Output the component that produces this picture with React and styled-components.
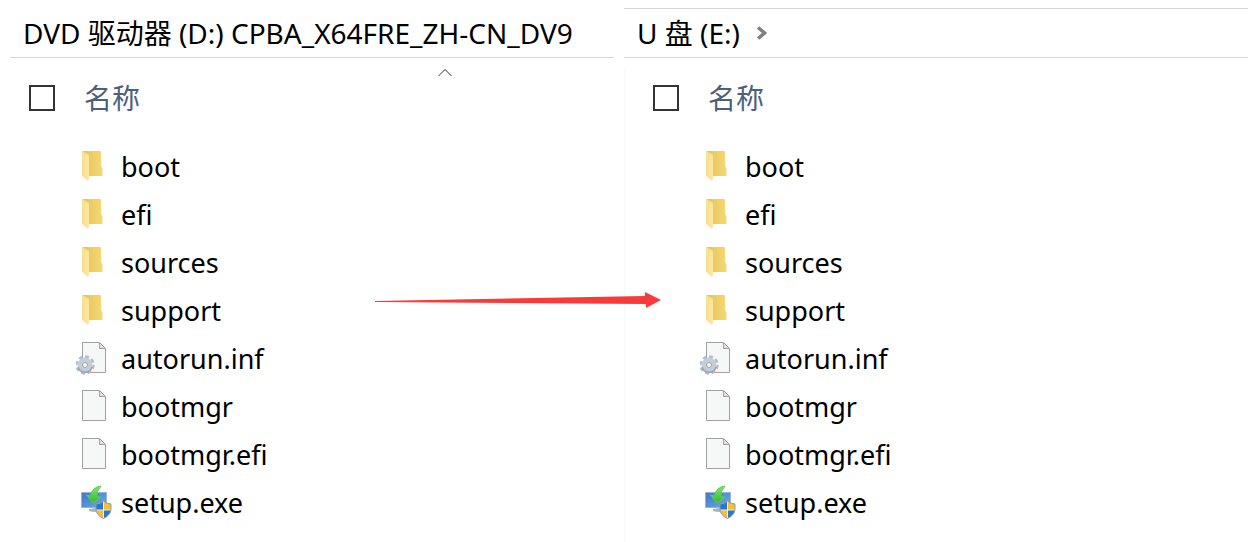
import React from "react";
import styled, { createGlobalStyle } from "styled-components";

const GlobalStyle = createGlobalStyle`
  * {
    box-sizing: border-box;
  }
  body {
    margin: 0;
    background-color: #fff;
    color: #000;
    font-family: "Noto Sans", "Noto Sans CJK SC", sans-serif;
    font-size: 27px;
    line-height: 40px;
  }
`;

const Page = styled.main`
  position: relative;
  display: grid;
  grid-template-columns: 1fr 1fr;
  min-height: 100vh;
`;

const Pane = styled.section`
  display: flex;
  flex-direction: column;
  min-width: 0;
`;

const AddressBar = styled.header`
  display: flex;
  align-items: center;
  gap: 16px;
  height: 50px;
  margin: 8px ${(props) => (props.$inset ? "10px" : "0")} 0;
  padding: 0 13px;
  border-top: 1px solid ${(props) => (props.$inset ? "transparent" : "#d6d6d6")};
  border-bottom: 1px solid #d6d6d6;
`;

const Title = styled.h1`
  margin: 0;
  font-size: 28px;
  font-weight: 400;
  white-space: nowrap;
`;

const Content = styled.div`
  position: relative;
  flex: 1;
  margin-top: 10px;
  border-left: 1px solid ${(props) => (props.$divided ? "#f7f7f7" : "transparent")};
`;

const SortCaret = styled.svg`
  position: absolute;
  top: 0;
  left: 70%;
  width: 16px;
  height: 10px;
`;

const Table = styled.table`
  width: 100%;
  border-collapse: collapse;
  table-layout: fixed;
`;

const CheckHead = styled.th`
  width: 75px;
  height: 60px;
  padding: 0 0 0 28px;
  text-align: left;
`;

const NameHead = styled.th`
  padding: 0 0 0 8px;
  color: #4c607a;
  font-size: 28px;
  font-weight: 400;
  text-align: left;
`;

const Checkbox = styled.input`
  appearance: none;
  display: block;
  width: 26px;
  height: 26px;
  margin: 0;
  border: 2px solid #333;
  background-color: #fff;
  &:checked {
    background-color: #0078d7;
  }
`;

const Body = styled.tbody`
  &::before {
    content: "";
    display: block;
    height: 15px;
  }
`;

const Cell = styled.td`
  height: 48px;
  padding: 0;
`;

const FileName = styled.div`
  display: flex;
  align-items: center;
  gap: 9px;
`;

const Icon = styled.svg`
  flex: none;
  width: 36px;
  height: 36px;
`;

const Chevron = styled.svg`
  width: 12px;
  height: 16px;
`;

const Arrow = styled.svg`
  position: absolute;
  top: 291px;
  left: 30%;
  width: 23%;
  height: 18px;
  pointer-events: none;
`;

function FolderIcon() {
  return (
    <Icon viewBox="0 0 36 36" aria-hidden="true">
      <defs>
        <linearGradient id="folderBack" x1="0" x2="1">
          <stop offset="0" stopColor="#e5c254" />
          <stop offset="1" stopColor="#f5d976" />
        </linearGradient>
        <linearGradient id="folderFront" x1="0" x2="1">
          <stop offset="0" stopColor="#f9df8b" />
          <stop offset="1" stopColor="#fbe7a3" />
        </linearGradient>
      </defs>
      <path d="M6 2h18q1 0 1 1v13l1.500 4v7H11z" fill="url(#folderBack)" />
      <path d="M6 2l6 3.500q1 1 1 2v22l-1 2.500-6-5z" fill="url(#folderFront)" />
    </Icon>
  );
}

function Sheet() {
  return (
    <>
      <path d="M6.500 1.500h17l6 6v24h-23z" fill="#f6f7f7" stroke="#a0a0a0" />
      <path d="M23.500 1.500v6h6z" fill="#e2e2e2" stroke="#a0a0a0" />
    </>
  );
}

function FileIcon() {
  return (
    <Icon viewBox="0 0 36 36" aria-hidden="true">
      <Sheet />
    </Icon>
  );
}

function SettingsFileIcon() {
  return (
    <Icon viewBox="0 0 36 36" aria-hidden="true">
      <Sheet />
      <g transform="translate(9 24)">
        <circle r="8" fill="none" stroke="#b3bdc8" strokeWidth="3.500" strokeDasharray="3.600 2.683" />
        <circle r="5" fill="none" stroke="#c5ced7" strokeWidth="5" />
        <path d="M-7 2a7.300 7.300 0 0 0 14 0" fill="none" stroke="#98a4b0" strokeWidth="1.500" />
        <circle r="2.500" fill="#f4f6f7" stroke="#9aa5b0" />
      </g>
    </Icon>
  );
}

function SetupIcon() {
  return (
    <Icon viewBox="0 0 36 36" aria-hidden="true">
      <defs>
        <linearGradient id="screen" x1="0" x2="1" y2="1">
          <stop offset="0" stopColor="#3f78c5" />
          <stop offset="1" stopColor="#70a9e8" />
        </linearGradient>
        <linearGradient id="download" x1="0" y1="0" x2="0" y2="1">
          <stop offset="0" stopColor="#8be468" />
          <stop offset="1" stopColor="#2dbb30" />
        </linearGradient>
        <clipPath id="shield">
          <path d="M27.500 16q3 3 7.500 3v5q0 6-7.500 9.500-7.500-3.500-7.500-9.500v-5q4.500 0 7.500-3z" />
        </clipPath>
      </defs>
      <path d="M5.500 7.500h25v15h-25z" fill="url(#screen)" stroke="#9ab4d2" />
      <path d="M13 24l7-1v4q-4 0-7-1z" fill="#a6b5c4" />
      <path
        d="M25 1q-9 1-10.500 10l-4-1 6.500 8 8-6-4.500 0q0-6 4.500-11z"
        fill="url(#download)"
        stroke="#5ccc50"
      />
      <g clipPath="url(#shield)">
        <path d="M19 15h8.500v10H19zM27.500 25H36v10h-8.500z" fill="#2878cb" />
        <path d="M27.500 15H36v10h-8.500zM19 25h8.500v10H19z" fill="#f8bd35" />
        <path d="M27.500 16v18M19 25h17" stroke="#e9edf0" />
      </g>
      <path
        d="M27.500 16q3 3 7.500 3v5q0 6-7.500 9.500-7.500-3.500-7.500-9.500v-5q4.500 0 7.500-3z"
        fill="none"
        stroke="#8d9ba8"
      />
    </Icon>
  );
}

const icons = {
  folder: FolderIcon,
  file: FileIcon,
  settings: SettingsFileIcon,
  setup: SetupIcon,
};

const files = [
  { name: "boot", type: "folder" },
  { name: "efi", type: "folder" },
  { name: "sources", type: "folder" },
  { name: "support", type: "folder" },
  { name: "autorun.inf", type: "settings" },
  { name: "bootmgr", type: "file" },
  { name: "bootmgr.efi", type: "file" },
  { name: "setup.exe", type: "setup" },
];

function FileTable({ drive }) {
  return (
    <Table>
      <thead>
        <tr>
          <CheckHead>
            <Checkbox type="checkbox" aria-label={`${drive} 全选`} />
          </CheckHead>
          <NameHead>名称</NameHead>
        </tr>
      </thead>
      <Body>
        {files.map((file) => {
          const TypeIcon = icons[file.type];
          return (
            <tr key={file.name}>
              <Cell />
              <Cell>
                <FileName>
                  <TypeIcon />
                  {file.name}
                </FileName>
              </Cell>
            </tr>
          );
        })}
      </Body>
    </Table>
  );
}

function App() {
  return (
    <Page lang="zh-CN">
      <GlobalStyle />
      <Pane>
        <AddressBar $inset>
          <Title>DVD 驱动器 (D:) CPBA_X64FRE_ZH-CN_DV9</Title>
        </AddressBar>
        <Content>
          <SortCaret viewBox="0 0 16 10" aria-hidden="true">
            <path d="M1.500 8L8 1.500 14.500 8" fill="none" stroke="#333" />
          </SortCaret>
          <FileTable drive="D:" />
        </Content>
      </Pane>

      <Pane>
        <AddressBar>
          <Title>U 盘 (E:)</Title>
          <Chevron viewBox="0 0 12 16" aria-hidden="true">
            <path d="M2 2.500L8.500 8 2 13.500" fill="none" stroke="#808080" strokeWidth="3.500" />
          </Chevron>
        </AddressBar>
        <Content $divided>
          <FileTable drive="E:" />
        </Content>
      </Pane>

      {/* Copy direction: disc to USB drive */}
      <Arrow viewBox="0 0 286 18" preserveAspectRatio="none" aria-hidden="true">
        <path d="M1 10L270 5V1l16 8-15 8v-4L1 11z" fill="#f83a3a" />
      </Arrow>
    </Page>
  );
}

export default App;
